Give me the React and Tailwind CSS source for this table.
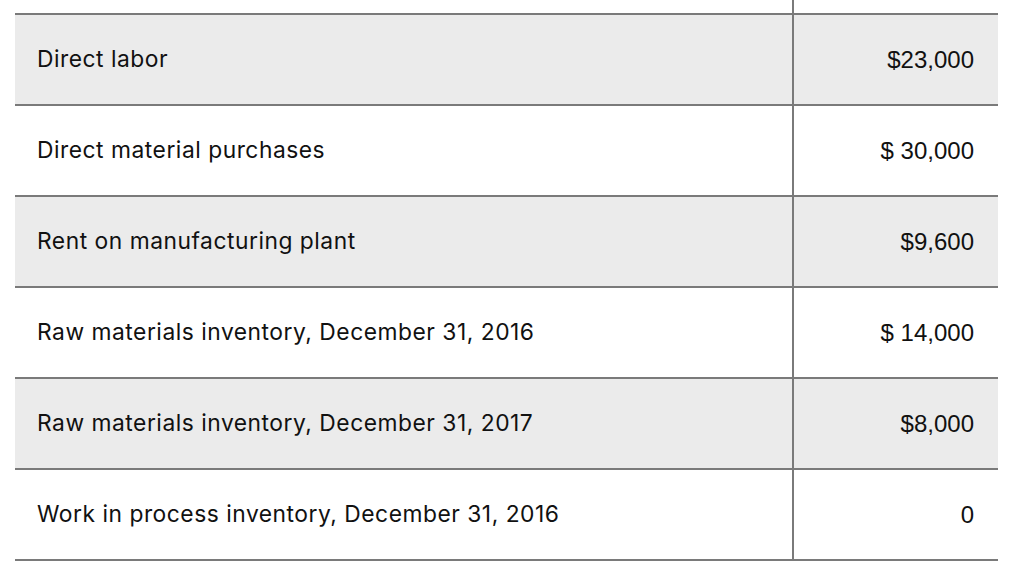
export default function App() {
  const rows = [
    ["Direct labor", "$23,000"],
    ["Direct material purchases", "$ 30,000"],
    ["Rent on manufacturing plant", "$9,600"],
    ["Raw materials inventory, December 31, 2016", "$ 14,000"],
    ["Raw materials inventory, December 31, 2017", "$8,000"],
    ["Work in process inventory, December 31, 2016", "0"],
  ];
  return (
    <div className="w-[1024px] h-[582px] bg-white overflow-hidden">
      <div className="ml-[15px] w-[983px] flex flex-col">
        <div className="h-[13px] flex">
          <div className="w-[777px]" />
          <div className="w-[2px] bg-[#7a7a7a]" />
        </div>
        {rows.map(([label, amount], i) => (
          <div
            key={i}
            className={`flex border-t-2 border-[#7a7a7a] ${i === rows.length - 1 ? "border-b-2 h-[93px]" : "h-[91px]"} ${i % 2 === 0 ? "bg-[#ebebeb]" : "bg-white"}`}
          >
            <div className="w-[777px] flex items-center pl-[22px] text-[22.8px] text-[#111] font-['Inter',sans-serif] tracking-[0.52px]">
              {label}
            </div>
            <div className="w-[2px] bg-[#7a7a7a]" />
            <div className="flex-1 flex items-center justify-end pr-[24px] text-[24px] text-[#111] font-['Liberation_Sans',Arial,sans-serif]">
              {amount}
            </div>
          </div>
        ))}
      </div>
    </div>
  );
}
